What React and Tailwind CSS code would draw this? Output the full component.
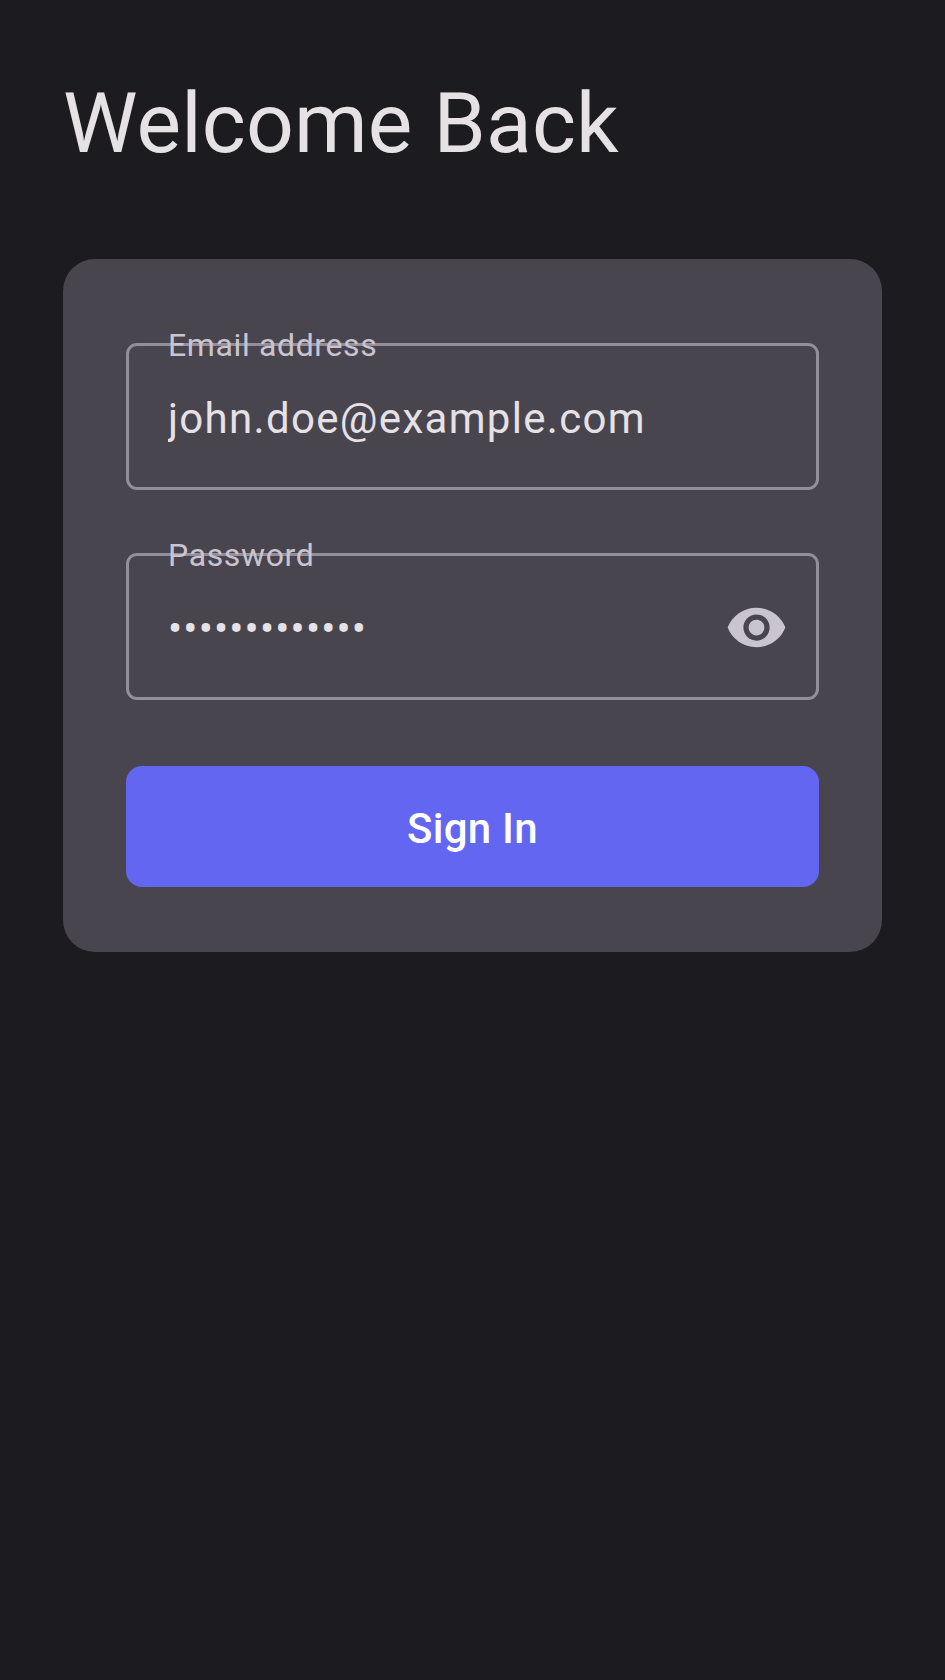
function Field({ label, children }) {
  return (
    <div className="relative flex h-[147px] items-center justify-between rounded-[11px] border-[3px] border-[#938f99] pl-[39px] pr-7 pt-[3px] text-[42px] text-[#e6e1e5]">
      {children}
      <span className="absolute left-[39px] top-[-22px] text-[32px] leading-[42px] tracking-[0.63px] text-[#cac4d0]">{label}</span>
    </div>
  );
}

export default function App() {
  return (
    <main className="min-h-[1680px] bg-[#1c1b1f] px-[63px] pt-[65px] font-['Roboto',sans-serif]">
      <h1 className="h-[194px] text-[84px] leading-[117px] tracking-[0.18px] text-[#e6e1e5]">Welcome Back</h1>
      <section className="flex h-[693px] flex-col rounded-[32px] bg-[#49454f] px-[63px] pt-[84px]">
        <Field label="Email address">
          <span className="overflow-hidden tracking-[1.31px]">john.doe@example.com</span>
        </Field>
        <div className="h-[63px]" />
        <Field label="Password">
          <span className="tracking-[1.15px]">•••••••••••••</span>
          <svg className="mb-0.5 size-[63px]" viewBox="0 0 24 24" fill="#cac4d0">
            <path d="M12 4.5C7 4.5 2.73 7.61 1 12c1.73 4.39 6 7.5 11 7.5s9.27-3.11 11-7.5c-1.73-4.39-6-7.5-11-7.5zM12 17c-2.76 0-5-2.24-5-5s2.24-5 5-5 5 2.24 5 5-2.24 5-5 5zm0-8c-1.66 0-3 1.34-3 3s1.34 3 3 3 3-1.34 3-3-1.34-3-3-3z" />
          </svg>
        </Field>
        <button className="mt-[66px] h-[121px] rounded-[16px] bg-[#6366f1] pt-1 text-[42px] font-medium tracking-[0.26px] text-white">Sign In</button>
      </section>
    </main>
  );
}
